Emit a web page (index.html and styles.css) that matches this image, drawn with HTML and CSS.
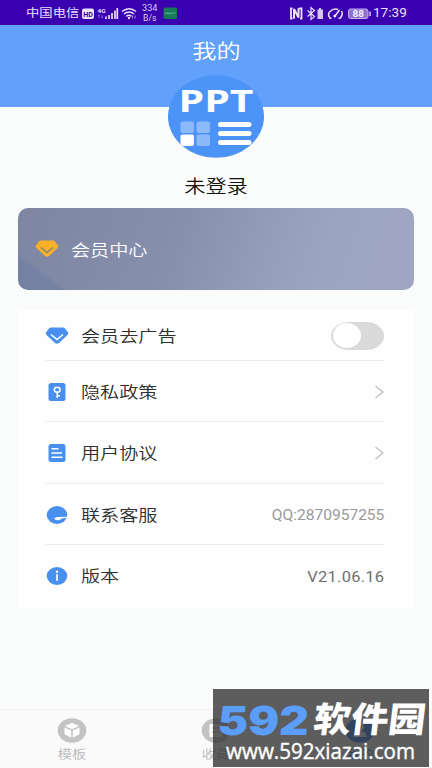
FILE: index.html
```html
<!DOCTYPE html>
<html lang="zh-CN">
<head>
<meta charset="utf-8">
<title>我的</title>
<link rel="stylesheet" href="styles.css">
</head>
<body>
<div class="app">
  <div class="status">
    <span class="carrier"><span class="wide">中国电信</span></span>
    <svg class="signals" width="102" height="24" viewBox="0 0 102 24">
      <rect x="2" y="7.500" width="12" height="10.500" rx="2" fill="#e9e0fa"/>
      <text x="3.200" y="15.800" class="hd" textLength="9.600" lengthAdjust="spacingAndGlyphs">HD</text>
      <text x="17.500" y="12" class="net" textLength="8" lengthAdjust="spacingAndGlyphs">4G</text>
      <path d="M19 14v3m-1-2 1-1 1 1M22 14v3m-1-1 1 1 1-1" stroke="#8f70d8" stroke-width=".8" fill="none"/>
      <path d="M26 18v-2.500M29 18v-4M32 18v-6M35 18V9.500M37.300 18V7" stroke="#e9e0fa" stroke-width="1.700"/>
      <g fill="none" stroke="#e9e0fa" stroke-width="1.500"><path d="M42 10.500q7-5.500 14 0M44 13q5-4 10 0M46.300 15.300q2.700-2 5.200 0"/></g>
      <circle cx="49" cy="17" r="1.200" fill="#e9e0fa"/>
      <path d="M52.500 17.500v-3M55 14.500v3" stroke="#a78be0" stroke-width="1"/>
      <text x="62" y="10.300" class="rate" textLength="15.500" lengthAdjust="spacingAndGlyphs">334</text>
      <text x="63" y="19.800" class="rate" textLength="13.500" lengthAdjust="spacingAndGlyphs">B/s</text>
      <rect x="83.500" y="6.500" width="13.500" height="11.500" rx="1.500" fill="#167a58"/>
      <path d="M85 12.500h1l1-1 1 1.500 1.500-1.500 1 1.500 1.500-1.500 1 1 1-1 1.500 1" stroke="#62bd91" stroke-width="1" fill="none"/>
    </svg>
    <span class="gap"></span>
    <svg width="86" height="24" viewBox="0 0 86 24">
      <path d="M5.500 7.500H4v10h1.500M12 7.500h2.500v10H13" fill="none" stroke="#e9e0fa" stroke-width="1.800"/>
      <path d="M7 17.800V8l4.500 8.500V7.200" fill="none" stroke="#e9e0fa" stroke-width="2"/>
      <path d="m20.500 9.500 7 6-3.500 3v-12l3.500 3-7 6" fill="none" stroke="#e9e0fa" stroke-width="1.200"/>
      <path d="M30.500 8.500h1.500V7h2v1.500h2V18h-5.500z" fill="#d4c6f1"/>
      <path d="M43 17q-3-3.500 0-6.500 3.500-3.500 8-2M54.500 10q2 4-1.500 7.200M44.500 17.200h-2M53.500 17.200h-2" fill="none" stroke="#e9e0fa" stroke-width="1.500"/>
      <path d="m48 15 4.500-6" stroke="#e9e0fa" stroke-width="1.600"/><circle cx="47.800" cy="15" r="1.500" fill="#e9e0fa"/>
      <rect x="61.500" y="8" width="19.500" height="9.500" rx="2" fill="#8d70ce" stroke="#c5b4ea"/>
      <rect x="82.300" y="10.500" width="1.500" height="4.500" fill="#d4c6f1"/>
      <text x="65.500" y="16" class="charge" textLength="11.500" lengthAdjust="spacingAndGlyphs">88</text>
    </svg>
    <span class="clock"><span class="wide">17:39</span></span>
  </div>

  <header class="header"><h1 class="wide">我的</h1></header>

  <section class="profile">
    <svg class="avatar" width="96" height="83" viewBox="0 0 96 83">
      <defs><clipPath id="disc"><ellipse cx="48" cy="41.500" rx="48" ry="41.300"/></clipPath></defs>
      <g clip-path="url(#disc)">
        <rect width="96" height="83" fill="#4b93f7"/>
        <text x="10.500" y="37" class="ppt" textLength="75" lengthAdjust="spacingAndGlyphs">PPT</text>
        <g fill="#8bb9fa"><rect x="12.500" y="46.500" width="13.500" height="11.500" rx="2"/><rect x="28.500" y="46.500" width="13.500" height="11.500" rx="2"/><rect x="28.500" y="59.500" width="13.500" height="11.500" rx="2"/></g>
        <rect x="12.500" y="59.500" width="13.500" height="11.500" rx="2" fill="#fff"/>
        <path d="M52.500 49.500H81M52.500 58.500H81M52.500 67.500H81" stroke="#fff" stroke-width="5" stroke-linecap="round"/>
      </g>
    </svg>
    <div class="name wide">未登录</div>
  </section>

  <section class="vip">
    <svg width="24" height="18" viewBox="0 0 24 18">
      <path d="M6 .500h12q1 0 2 1l3 4q.7 1.300-.5 2.500l-8.500 8q-2 1.500-4 0L1.500 8Q.3 6.800 1 5.500l3-4q1-1 2-1z" fill="#fbb127"/>
      <path d="m6 7.500 6 5 6-5" fill="none" stroke="#8b8274" stroke-width="1.500"/>
    </svg>
    <span class="label wide">会员中心</span>
  </section>

  <section class="list">
    <div class="row first">
      <svg class="icon" width="24" height="18" viewBox="0 0 24 18"><path d="M6 .500h12q1 0 2 1l3 4q.7 1.300-.5 2.500l-8.500 8q-2 1.500-4 0L1.500 8Q.3 6.800 1 5.500l3-4q1-1 2-1z" fill="#488ff0"/><path d="m6 7.500 6 5 6-5" fill="none" stroke="#fff" stroke-width="1.500"/></svg>
      <span class="label wide">会员去广告</span>
      <span class="switch"><span class="knob"></span></span>
    </div>
    <div class="row">
      <svg class="icon" width="24" height="18" viewBox="0 0 24 18"><rect x="3.500" width="17" height="18" rx="2.500" fill="#488ff0"/><ellipse cx="12.200" cy="6.800" rx="2.900" ry="2.500" fill="none" stroke="#fff" stroke-width="1.500"/><path d="M12.200 9.300v5.700M12 12.800h3" stroke="#fff" stroke-width="1.500"/></svg>
      <span class="label wide">隐私政策</span>
      <svg class="chevron" width="10" height="14" viewBox="0 0 10 14"><path d="m1.500 1 7.500 6-7.500 6" fill="none" stroke="#bcbcbc" stroke-width="1.200"/></svg>
    </div>
    <div class="row">
      <svg class="icon" width="24" height="18" viewBox="0 0 24 18"><rect x="3.500" width="17" height="18" rx="2.500" fill="#488ff0"/><path d="M7 4.800h6M7 9h9.500M7 13.200h10" stroke="#fff" stroke-width="1.500" stroke-linecap="round"/></svg>
      <span class="label wide">用户协议</span>
      <svg class="chevron" width="10" height="14" viewBox="0 0 10 14"><path d="m1.500 1 7.500 6-7.500 6" fill="none" stroke="#bcbcbc" stroke-width="1.200"/></svg>
    </div>
    <div class="row">
      <svg class="icon" width="24" height="18" viewBox="0 0 24 18"><ellipse cx="12" cy="9" rx="10.300" ry="9" fill="#488ff0"/><path d="M23 10.800q-6 0-9.500.1-3.800-.1-4 1.600.2 2 3.500 1.700 2.500-.2 3.500-1.700 3-.8 6.500-.8z" fill="#fff"/></svg>
      <span class="label wide">联系客服</span>
      <span class="value wide-end muted">QQ:2870957255</span>
    </div>
    <div class="row">
      <svg class="icon" width="24" height="18" viewBox="0 0 24 18"><ellipse cx="12" cy="9" rx="10.300" ry="9" fill="#488ff0"/><circle cx="12" cy="4.800" r="1.200" fill="#fff"/><path d="M12 7.300v6.500" stroke="#fff" stroke-width="1.700"/></svg>
      <span class="label wide">版本</span>
      <span class="value wide-end">V21.06.16</span>
    </div>
  </section>

  <nav class="tabs">
    <div class="tab">
      <svg width="30" height="25" viewBox="0 0 30 25"><ellipse cx="15" cy="12.500" rx="14.300" ry="12.200" fill="#c3c3c3"/><path d="m15 4.800 7 3.200-7 3.200L8 8z" fill="#fff"/><path d="m7.500 9.500 6.700 3v7.300l-6.700-3.500zM22.500 9.500l-6.700 3v7.300l6.700-3.500z" fill="#fff"/></svg>
      <span class="caption">模板</span>
    </div>
    <div class="tab">
      <svg width="30" height="25" viewBox="0 0 30 25"><ellipse cx="15" cy="12.500" rx="14.300" ry="12.200" fill="#c3c3c3"/><rect x="8.500" y="6" width="13" height="13" rx="1" fill="#fff"/><path d="M11 10h8M11 14h8" stroke="#c3c3c3" stroke-width="1.500"/></svg>
      <span class="caption">收藏</span>
    </div>
    <div class="tab active">
      <svg width="30" height="25" viewBox="0 0 30 25"><ellipse cx="15" cy="12.500" rx="14.300" ry="12.200" fill="#2a80f8"/><ellipse cx="15" cy="9" rx="4" ry="3.800" fill="#fff"/><path d="M8 19q1-6 7-6t7 6z" fill="#fff"/></svg>
      <span class="caption">我的</span>
    </div>
  </nav>

  <svg class="watermark" width="216" height="78" viewBox="0 0 216 78">
    <rect width="216" height="78" fill="#333" fill-opacity=".79"/>
    <g transform="translate(4 46) skewX(-3)">
      <text class="brand blue" x="0" y="0" textLength="91" lengthAdjust="spacingAndGlyphs">592</text>
    </g>
    <g transform="translate(4 46) skewX(-7)">
      <text class="brand cn" x="95" y="-3" textLength="112" lengthAdjust="spacingAndGlyphs">软件园</text>
    </g>
    <text class="site" x="13" y="69.500" textLength="189" lengthAdjust="spacingAndGlyphs">www.592xiazai.com</text>
  </svg>
</div>
</body>
</html>
```
FILE: styles.css
```css
* { box-sizing: border-box; }
body {
  margin: 0;
  font-family: Roboto, "Noto Sans CJK SC", sans-serif;
  font-weight: 400;
  color: #303030;
  background: #fafbfb;
}
.app {
  position: relative;
  display: flex;
  flex-direction: column;
  width: 432px;
  height: 768px;
  overflow: hidden;
}
.wide, .wide-end {
  display: inline-block;
  white-space: nowrap;
  transform: scaleX(1.18);
  transform-origin: left center;
}
.wide-end { transform-origin: right center; }

.status {
  display: flex;
  align-items: center;
  height: 25px;
  padding: 0 24px 0 26px;
  background: #3a00b0;
  color: #e9e0fa;
}
.carrier { width: 54px; padding-top: 2px; font-size: 11.300px; line-height: 23px; }
.gap { flex: 1; }
.clock { width: 35px; padding-top: 1px; font-size: 12px; line-height: 23px; }
.clock .wide { transform: scaleX(1.13); }
.hd { font: 700 8px Roboto, sans-serif; fill: #3a00b0; }
.net { font: 700 6px Roboto, sans-serif; fill: #e9e0fa; }
.rate { font: 400 8.500px Roboto, sans-serif; fill: #d9cdf2; }
.charge { font: 700 8.500px Roboto, sans-serif; fill: #f4effc; }

.header {
  height: 82px;
  background: #61a0fb;
  color: #fff;
  text-align: center;
}
.header h1 {
  margin: 0;
  padding-top: 13px;
  font-size: 20.500px;
  font-weight: 350;
  line-height: 29px;
  transform-origin: center;
}

.profile {
  display: flex;
  flex-direction: column;
  align-items: center;
  height: 133px;
  margin-top: -32px;
}
.avatar { flex: none; }
.ppt { font: 700 29.500px "Open Sans", sans-serif; fill: #fff; }
.name {
  margin-top: 16px;
  font-size: 18px;
  font-weight: 350;
  line-height: 26px;
  color: #111;
  transform-origin: center;
}

.vip {
  display: flex;
  align-items: center;
  flex: none;
  height: 82px;
  margin: 0 18px;
  padding-left: 17px;
  border-radius: 10px;
  color: #fff;
  background:
    linear-gradient(38deg, #7481a3 0 8%, rgba(116, 129, 163, 0) 10%),
    linear-gradient(108deg, #7e86a2 0%, #868fab 40%, #949db9 62%, #9ca5c1 78%, #9fa6c2 100%);
}
.vip .label { margin-left: 12px; padding-top: 3px; font-size: 16.200px; font-weight: 350; line-height: 24px; }

.list {
  flex: none;
  height: 298px;
  margin: 20px 18px 0;
  padding: 0 30px 0 27px;
  background: #fefefe;
}
.row {
  display: flex;
  align-items: center;
  height: 61.600px;
  padding-top: 2px;
  border-bottom: 1px solid #ebebeb;
}
.row.first { height: 50.500px; }
.row:last-child { border-bottom: 0; padding-top: 0; }
.row .icon { flex: none; }
.row .label { margin-left: 12px; padding-top: 2px; font-size: 16.200px; font-weight: 350; line-height: 24px; }
.value, .chevron, .switch { margin-left: auto; }
.value { padding-top: 2px; font-size: 14px; color: #707070; letter-spacing: .2px; margin-right: -.2px; }
.value.muted { font-size: 14px; letter-spacing: 0; margin-right: 0; padding-top: 1px; color: #999; transform: scaleX(1.11); }
.switch {
  width: 53px;
  height: 28px;
  padding: 1.500px;
  border-radius: 18px / 14px;
  background: #dadada;
}
.knob {
  display: block;
  width: 28px;
  height: 25px;
  border-radius: 50%;
  background: #fff;
}

.tabs {
  display: flex;
  margin-top: auto;
  height: 59px;
  border-top: 1px solid #f1f1f1;
  background: #fafafa;
}
.tab {
  display: flex;
  flex: 1;
  flex-direction: column;
  align-items: center;
  padding-top: 8px;
  color: #b8b8b8;
}
.tab.active { color: #2a80f8; }
.caption { font-size: 12px; font-weight: 350; line-height: 18px; margin-top: 3px; transform: scaleX(1.18); }

.watermark { position: absolute; left: 213px; top: 689px; }
.brand { font-weight: 900; }
.blue { font-family: Inter, sans-serif; font-size: 40px; fill: #5b9efa; }
.cn { font-family: "Noto Sans CJK SC", sans-serif; font-size: 35px; fill: #fff; }
.site { font: 400 21px "Open Sans", sans-serif; fill: #fff; stroke: #fff; stroke-width: .4px; }
```
